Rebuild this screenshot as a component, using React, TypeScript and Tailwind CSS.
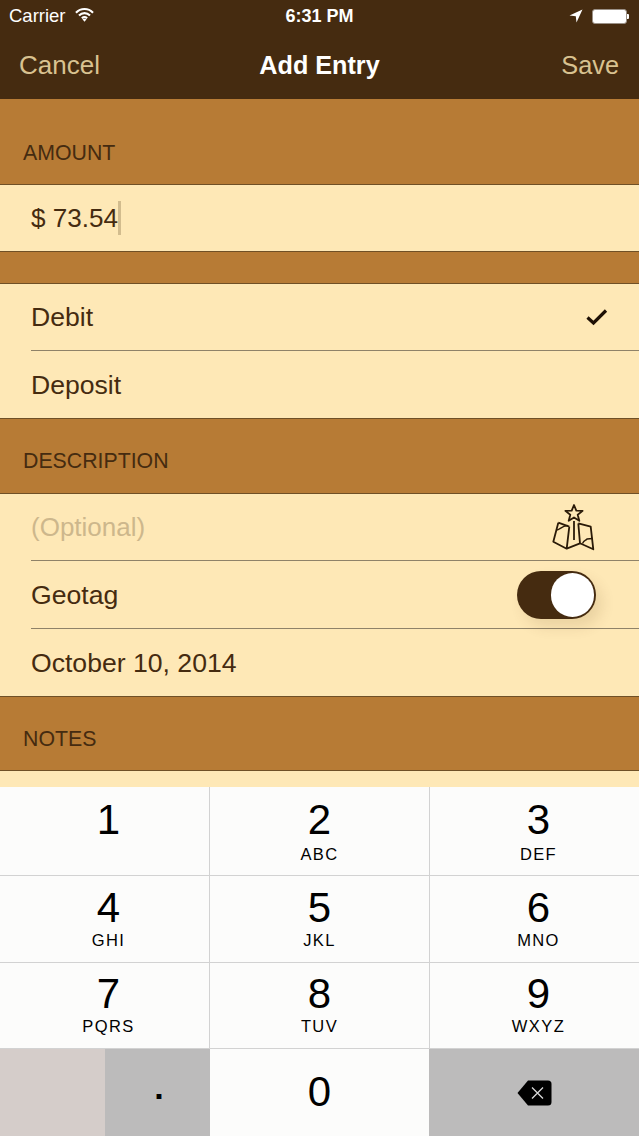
import React from "react";

const sans = { fontFamily: '"Liberation Sans", Arial, sans-serif' };

function Header({ label, h, pb = "pb-[18px]" }: { label: string; h: string; pb?: string }) {
  return (
    <div className={`${h} ${pb} flex items-end bg-[#b77b35] border-b border-[#6f5026] pl-[23px] text-[21.3px] leading-[26px] text-[#452b10]`}>
      {label}
    </div>
  );
}

function Row({ children, h = "h-[67px]" }: { children: React.ReactNode; h?: string }) {
  return (
    <div className="bg-[#fee8b6] pl-[31px]">
      <div className={`${h} flex items-center justify-between text-[26.6px] text-[#452b10] border-b border-[#8f8268]`}>
        {children}
      </div>
    </div>
  );
}

function Key({ n, s, className = "", numClass = "mt-[6px]", subClass = "mt-[-3px]" }: { n: string; s?: string; className?: string; numClass?: string; subClass?: string }) {
  return (
    <div className={`flex flex-col items-center bg-[#fcfcfb] text-black ${className}`}>
      <div className={`text-[42px] leading-[54px] ${numClass}`}>{n}</div>
      {s && <div className={`text-[16.5px] leading-[20px] tracking-[1.4px] ${subClass}`}>{s}</div>}
    </div>
  );
}

export default function App() {
  return (
    <div style={sans} className="w-[639px] h-[1136px] overflow-hidden flex flex-col bg-[#fee8b6]">
      {/* Status + nav */}
      <div className="h-[99px] shrink-0 bg-[#452b10] px-[9px] flex flex-col">
        <div className="h-[32px] flex items-center justify-between text-white text-[18.5px]">
          <div className="flex items-center gap-[9px] w-[200px]">
            <span>Carrier</span>
            <svg width="19" height="15" viewBox="0 0 20 15" fill="none" stroke="#fff" strokeWidth="2.2" className="mt-[-3px]">
              <path d="M1 5.6 C6 0.4 14 0.4 19 5.6" />
              <path d="M4.2 8.6 C7.6 5.2 12.4 5.2 15.8 8.6" />
              <path d="M7.2 11.4 C8.8 10 11.2 10 12.8 11.4" />
              <path d="M10 15 L7.8 12.6 C9 11.8 11 11.8 12.2 12.6 Z" fill="#fff" stroke="none" />
            </svg>
          </div>
          <span className="font-bold text-[18px]">6:31 PM</span>
          <div className="flex items-center justify-end w-[200px] pr-[1px]">
            <svg width="14" height="14" viewBox="0 0 14 14" className="mr-[9px]">
              <path d="M13.5 0.5 L0.5 6.5 L6.8 7.2 L7.5 13.5 Z" fill="#fff" />
            </svg>
            <div className="w-[35px] h-[15px] rounded-[3px] bg-white border border-[#9a9086]" />
            <div className="w-[2px] h-[5px] bg-white rounded-r-[1px]" />
          </div>
        </div>
        <div className="flex-1 flex items-center justify-between px-[10px] text-[26px] text-[#d9c290]">
          <span className="w-[150px]">Cancel</span>
          <span className="font-bold text-white text-[25.2px]">Add Entry</span>
          <span className="w-[150px] text-right text-[25.3px] pr-[1px]">Save</span>
        </div>
      </div>

      <Header label="AMOUNT" h="h-[86px] shrink-0" />
      <div className="h-[67px] shrink-0 bg-[#fee8b6] border-b border-[#6f5026] pl-[31px] pt-[2px] flex items-center text-[26.1px] text-[#452b10]">
        <span>$ 73.54</span>
        <span className="w-[3px] h-[34px] bg-[#d2bc8e] mt-[-2px]" />
      </div>
      <div className="h-[32px] shrink-0 bg-[#b77b35] border-b border-[#6f5026]" />
      <Row>
        <span className="pt-[2px]">Debit</span>
        <svg width="22" height="18" viewBox="0 0 22 18" fill="none" stroke="#1e1005" strokeWidth="3.2" className="mr-[31px]">
          <path d="M1.5 9.5 L7.5 15 L20 2.5" />
        </svg>
      </Row>
      <div className="bg-[#fee8b6] h-[68px] shrink-0 pl-[31px] pt-[2px] flex items-center text-[26.6px] text-[#452b10] border-b border-[#6f5026]">
        Deposit
      </div>
      <Header label="DESCRIPTION" h="h-[75px] shrink-0" pb="pb-[19px]" />
      <Row>
        <span className="text-[#cdb78c] text-[26px]">(Optional)</span>
        <svg width="44" height="50" viewBox="0 0 44 50" fill="none" stroke="#2a1a08" strokeWidth="1.8" strokeLinejoin="round" className="mr-[43px]">
          <path d="M22 3 L24.3 8.6 L30.6 8.9 L25.7 12.8 L27.3 18.8 L22 15.5 L16.7 18.8 L18.3 12.8 L13.4 8.9 L19.7 8.6 Z" />
          <path d="M22 19 L22 38" />
          <path d="M6.3 20.7 L1.3 39.7 L14.7 46.7 L28 41.3 L41.3 47.3 L38.7 24.7 L26.3 21.3 M17.3 24.7 L6.3 20.7 M14.7 46.7 L17.3 24.7 M28 41.3 L26.3 21.3" />
          <path d="M4.5 28 C8 28 9 24 15.5 23.5 M30.5 41.5 C32 38 34 38.5 35 37 L40.5 36.5" strokeWidth="1.4" />
        </svg>
      </Row>
      <Row h="h-[68px]">
        <span className="pt-[2px]">Geotag</span>
        <div className="relative mr-[43px] w-[79px] h-[48px] rounded-full bg-[#452b10] shadow-[6px_8px_14px_rgba(90,60,20,0.12)]">
          <div className="absolute right-[2px] top-[2px] w-[43px] h-[44px] rounded-full bg-white" />
        </div>
      </Row>
      <div className="bg-[#fee8b6] h-[68px] shrink-0 pl-[31px] pt-[2px] flex items-center text-[26.6px] text-[#452b10] border-b border-[#6f5026]">
        October 10, 2014
      </div>
      <Header label="NOTES" h="h-[74px] shrink-0" />
      <div className="h-[16px] shrink-0 bg-[#fee8b6]" />

      {/* Keypad */}
      <div className="flex-1 grid grid-cols-[209px_1px_219px_1px_209px] grid-rows-[88px_1px_86px_1px_85px_1px_87px] bg-[#d2d2d2]">
        <Key n="1" className="pl-[8px]" />
        <div />
        <Key n="2" s="ABC" />
        <div />
        <Key n="3" s="DEF" className="pl-[8px]" />
        <div className="col-span-5" />
        <Key n="4" s="GHI" className="pl-[8px]" numClass="mt-[5px]" subClass="mt-[-5px]" />
        <div />
        <Key n="5" s="JKL" numClass="mt-[5px]" subClass="mt-[-5px]" />
        <div />
        <Key n="6" s="MNO" className="pl-[8px]" numClass="mt-[5px]" subClass="mt-[-5px]" />
        <div className="col-span-5" />
        <Key n="7" s="PQRS" className="pl-[8px]" numClass="mt-[4px]" subClass="mt-[-5px]" />
        <div />
        <Key n="8" s="TUV" numClass="mt-[4px]" subClass="mt-[-5px]" />
        <div />
        <Key n="9" s="WXYZ" className="pl-[8px]" numClass="mt-[4px]" subClass="mt-[-5px]" />
        <div className="col-span-5" />
        <div className="flex col-span-2">
          <div className="w-[105px] bg-[#d5cdca]" />
          <div className="flex-1 bg-[#bcbbbb] flex justify-center pl-[3px] pt-[13px] text-[34px] leading-[50px] font-bold text-black">.</div>
        </div>
        <Key n="0" numClass="mt-[16px]" />
        <div className="col-span-2 bg-[#bcbbbb] flex items-center justify-center">
          <svg width="35" height="26" viewBox="0 0 35 26">
            <path d="M11 0.5 H31 Q34.5 0.5 34.5 4 V22 Q34.5 25.5 31 25.5 H11 L0.5 13 Z" fill="#000" />
            <path d="M15 7.5 L26 18.5 M26 7.5 L15 18.5" stroke="#d8d8d8" strokeWidth="1.3" />
          </svg>
        </div>
      </div>
    </div>
  );
}
